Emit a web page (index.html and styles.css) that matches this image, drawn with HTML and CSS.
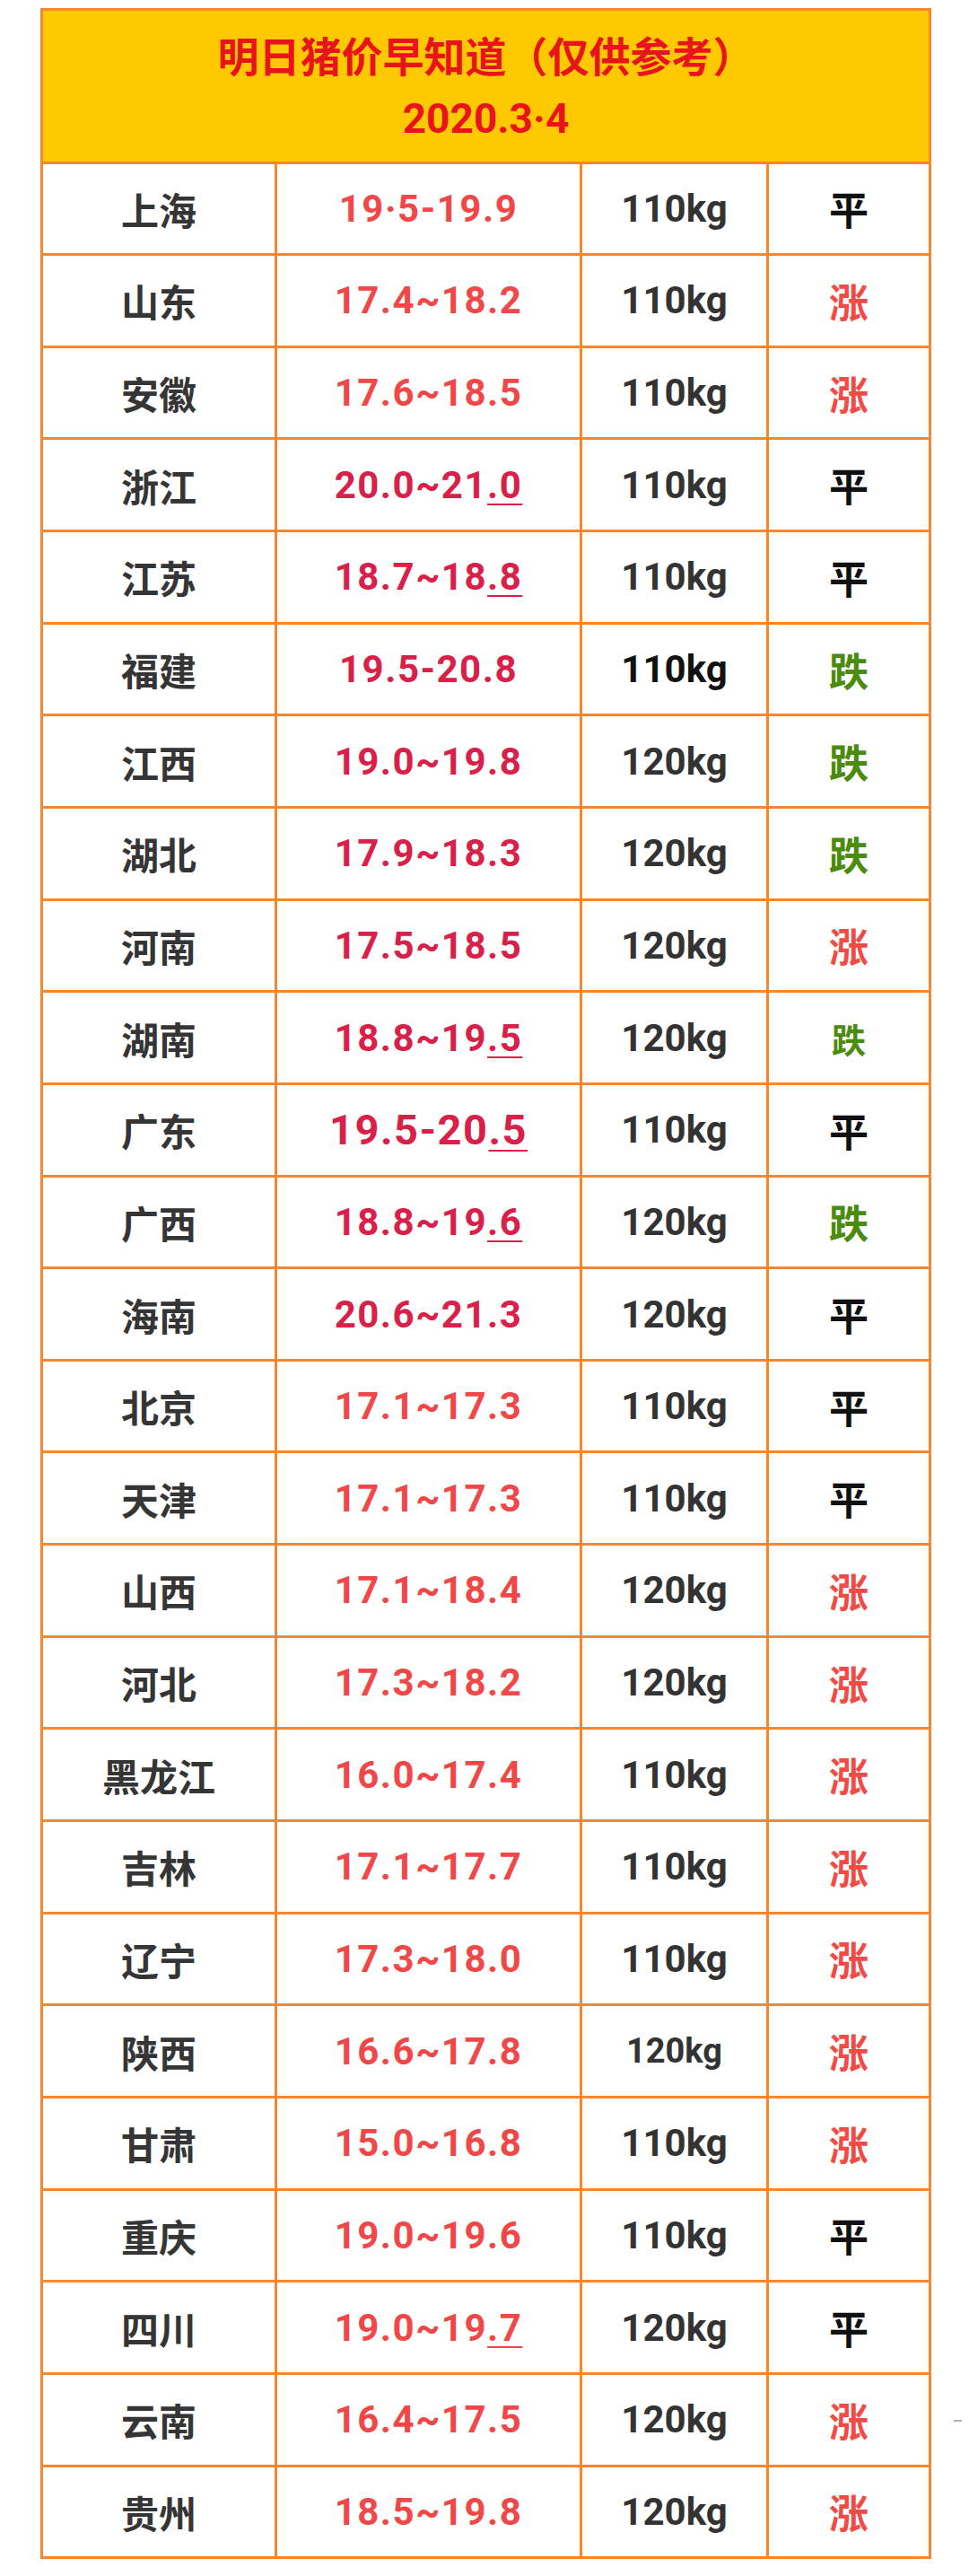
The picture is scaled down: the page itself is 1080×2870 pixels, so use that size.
FILE: index.html
```html
<!DOCTYPE html>
<html lang="zh-CN">
<head>
<meta charset="utf-8">
<title>明日猪价早知道</title>
<link rel="stylesheet" href="styles.css">
</head>
<body>
<div class="page">
  <table class="prices">
    <colgroup>
      <col class="c-region"><col class="c-price"><col class="c-weight"><col class="c-trend">
    </colgroup>
    <thead>
      <tr class="head">
        <th colspan="4">
          <div class="title">明日猪价早知道（仅供参考）</div>
          <div class="date">2020.3·4</div>
        </th>
      </tr>
    </thead>
    <tbody>
      <tr><td class="region">上海</td><td class="price coral">19·5-19.9</td><td class="weight">110kg</td><td class="trend flat">平</td></tr>
      <tr><td class="region">山东</td><td class="price coral">17.4~18.2</td><td class="weight">110kg</td><td class="trend up">涨</td></tr>
      <tr><td class="region">安徽</td><td class="price coral">17.6~18.5</td><td class="weight">110kg</td><td class="trend up">涨</td></tr>
      <tr><td class="region">浙江</td><td class="price crimson">20.0~21<u>.0</u></td><td class="weight">110kg</td><td class="trend flat">平</td></tr>
      <tr><td class="region">江苏</td><td class="price crimson">18.7~18<u>.8</u></td><td class="weight">110kg</td><td class="trend flat">平</td></tr>
      <tr><td class="region">福建</td><td class="price crimson">19.5-20.8</td><td class="weight strong">110kg</td><td class="trend down">跌</td></tr>
      <tr><td class="region">江西</td><td class="price crimson">19.0~19.8</td><td class="weight">120kg</td><td class="trend down">跌</td></tr>
      <tr><td class="region">湖北</td><td class="price crimson">17.9~18.3</td><td class="weight">120kg</td><td class="trend down">跌</td></tr>
      <tr><td class="region">河南</td><td class="price crimson">17.5~18.5</td><td class="weight">120kg</td><td class="trend up">涨</td></tr>
      <tr><td class="region">湖南</td><td class="price crimson">18.8~19<u>.5</u></td><td class="weight">120kg</td><td class="trend down small">跌</td></tr>
      <tr><td class="region">广东</td><td class="price crimson big">19.5-20<u>.5</u></td><td class="weight">110kg</td><td class="trend flat">平</td></tr>
      <tr><td class="region">广西</td><td class="price crimson">18.8~19<u>.6</u></td><td class="weight">120kg</td><td class="trend down">跌</td></tr>
      <tr><td class="region">海南</td><td class="price crimson">20.6~21.3</td><td class="weight">120kg</td><td class="trend flat">平</td></tr>
      <tr><td class="region">北京</td><td class="price coral">17.1~17.3</td><td class="weight">110kg</td><td class="trend flat">平</td></tr>
      <tr><td class="region">天津</td><td class="price coral">17.1~17.3</td><td class="weight">110kg</td><td class="trend flat">平</td></tr>
      <tr><td class="region">山西</td><td class="price coral">17.1~18.4</td><td class="weight">120kg</td><td class="trend up">涨</td></tr>
      <tr><td class="region">河北</td><td class="price coral">17.3~18.2</td><td class="weight">120kg</td><td class="trend up">涨</td></tr>
      <tr><td class="region">黑龙江</td><td class="price coral">16.0~17.4</td><td class="weight">110kg</td><td class="trend up">涨</td></tr>
      <tr><td class="region">吉林</td><td class="price coral">17.1~17.7</td><td class="weight">110kg</td><td class="trend up">涨</td></tr>
      <tr><td class="region">辽宁</td><td class="price coral">17.3~18.0</td><td class="weight">110kg</td><td class="trend up">涨</td></tr>
      <tr><td class="region">陕西</td><td class="price coral">16.6~17.8</td><td class="weight small">120kg</td><td class="trend up">涨</td></tr>
      <tr><td class="region">甘肃</td><td class="price coral">15.0~16.8</td><td class="weight">110kg</td><td class="trend up">涨</td></tr>
      <tr><td class="region">重庆</td><td class="price coral">19.0~19.6</td><td class="weight">110kg</td><td class="trend flat">平</td></tr>
      <tr><td class="region">四川</td><td class="price coral">19.0~19<u>.7</u></td><td class="weight">120kg</td><td class="trend flat">平</td></tr>
      <tr><td class="region">云南</td><td class="price coral">16.4~17.5</td><td class="weight">120kg</td><td class="trend up">涨</td></tr>
      <tr><td class="region">贵州</td><td class="price coral">18.5~19.8</td><td class="weight">120kg</td><td class="trend up">涨</td></tr>
    </tbody>
  </table>
  <span class="edge-mark"></span>
</div>
</body>
</html>
```

FILE: styles.css
```css
html, body {
  margin: 0;
  padding: 0;
  background: #ffffff;
}

.page {
  position: relative;
  width: 1080px;
  height: 2870px;
  padding: 9px 0 0 45px;
  box-sizing: border-box;
}

.prices {
  width: 990px;
  border-collapse: collapse;
  table-layout: fixed;
  font-family: "Noto Sans CJK SC", Roboto, sans-serif;
}

.c-region { width: 261px; }
.c-price { width: 340px; }
.c-weight { width: 208px; }
.c-trend { width: 181px; }

.prices th,
.prices td {
  border: 3px solid #f7872f;
  padding: 0;
  text-align: center;
  vertical-align: middle;
}

.head th {
  background: #ffc902;
  height: 167.5px;
  color: #e8141c;
  font-weight: 700;
}

.title {
  font-family: "Noto Sans CJK SC", sans-serif;
  font-size: 46px;
  line-height: 72px;
  letter-spacing: 0;
}

.date {
  font-family: Roboto, "Noto Sans CJK SC", sans-serif;
  font-size: 46px;
  line-height: 72px;
}

.prices td {
  height: 99.65px;
}

.region {
  font-family: "Noto Sans CJK SC", sans-serif;
  font-size: 42px;
  font-weight: 700;
  color: #353535;
}

.price {
  font-family: Roboto, sans-serif;
  font-size: 42px;
  font-weight: 700;
  letter-spacing: 1.5px;
}

.price u {
  text-decoration-thickness: 2px;
  text-underline-offset: 6px;
}

.price.coral { color: #f04848; }
.price.crimson { color: #d82048; }
.price.big { font-size: 47px; }

.weight {
  font-family: Roboto, sans-serif;
  font-size: 42px;
  font-weight: 700;
  color: #333333;
}

.weight.strong { color: #111111; }
.weight.small { font-size: 38px; }

.trend {
  font-family: "Noto Sans CJK SC", sans-serif;
  font-size: 44px;
  font-weight: 700;
}

.trend.flat { color: #111111; }
.trend.up { color: #f24a44; }
.trend.down { color: #4b8b0e; }
.trend.small { font-size: 38px; }

.edge-mark {
  position: absolute;
  left: 1063px;
  top: 2696px;
  width: 9px;
  height: 2px;
  background: #b0b0b0;
}
```
